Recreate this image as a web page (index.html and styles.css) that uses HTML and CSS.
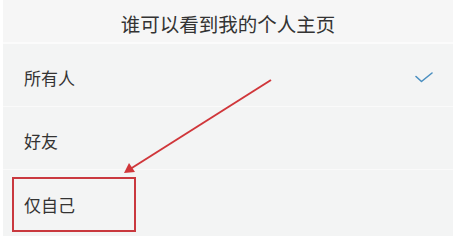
FILE: index.html
```html
<!DOCTYPE html>
<html lang="zh-CN">
<head>
<meta charset="utf-8">
<link rel="stylesheet" href="styles.css">
</head>
<body>
<div class="page">
  <div class="header">谁可以看到我的个人主页</div>
  <div class="list">
    <div class="row"><span class="label">所有人</span>
      <svg class="check" width="18" height="11" viewBox="0 0 18 11"><path d="M1 4.5 L6.5 9.5 L17 1" fill="none" stroke="#4b8fc0" stroke-width="1.6" stroke-linecap="round" stroke-linejoin="round"/></svg>
    </div>
    <div class="row"><span class="label">好友</span></div>
    <div class="row last"><span class="label">仅自己</span></div>
  </div>
  <div class="mark-box"></div>
  <svg class="arrow" width="456" height="240" viewBox="0 0 456 240">
    <line x1="271" y1="80" x2="131" y2="168.5" stroke="#d0363a" stroke-width="2"/>
    <polygon points="124,173 129,163 135,172" fill="#d0363a"/>
  </svg>
</div>
</body>
</html>
```
FILE: styles.css
```css
html, body {
  margin: 0;
  padding: 0;
  background: #ffffff;
}
.page {
  position: relative;
  width: 456px;
  height: 240px;
  padding: 0 3px;
  box-sizing: border-box;
  font-family: "Noto Sans CJK SC", "Noto Sans", sans-serif;
  color: #333333;
}
.header {
  height: 44px;
  background: #f6f6f6;
  border-bottom: 2px solid #fbfbfb;
  display: flex;
  align-items: center;
  justify-content: center;
  font-size: 19.5px;
  line-height: 1;
  padding-top: 5px;
  box-sizing: border-box;
}
.list {
  background: #f3f4f4;
  height: 192px;
  display: flex;
  flex-direction: column;
}
.row {
  height: 63px;
  display: flex;
  align-items: flex-end;
  justify-content: space-between;
  padding: 0 20px 20px 21px;
  box-sizing: border-box;
  border-bottom: 1px solid #fafafa;
  flex: none;
}
.row.last {
  border-bottom: none;
  height: 65px;
  padding-bottom: 22px;
}
.label {
  font-size: 17px;
  line-height: 1;
}
.check {
  display: block;
  margin-bottom: 3px;
}
.mark-box {
  position: absolute;
  left: 12px;
  top: 177px;
  width: 124px;
  height: 55px;
  border: 2px solid #c9383e;
  box-sizing: border-box;
}
.arrow {
  position: absolute;
  left: 0;
  top: 0;
}
```
